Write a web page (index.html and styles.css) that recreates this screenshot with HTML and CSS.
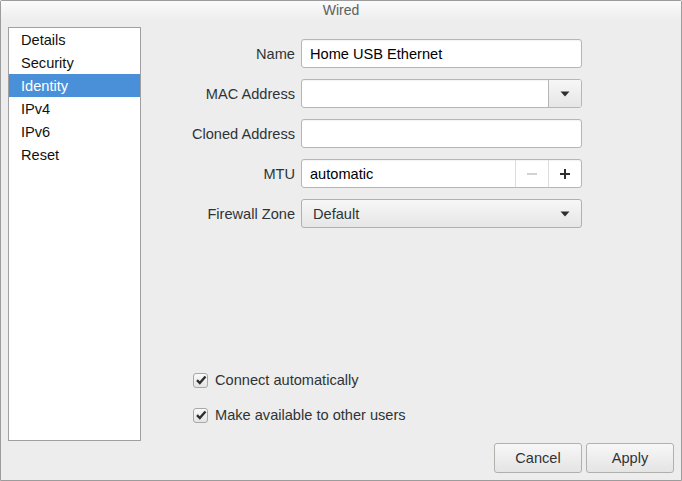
FILE: index.html
```html
<!DOCTYPE html>
<html>
<head>
<meta charset="utf-8">
<link rel="stylesheet" href="styles.css">
</head>
<body>
<div class="window">
  <div class="titlebar">Wired</div>
  <div class="content">
    <ul class="sidebar">
      <li>Details</li>
      <li>Security</li>
      <li class="selected">Identity</li>
      <li>IPv4</li>
      <li>IPv6</li>
      <li>Reset</li>
    </ul>
    <div class="main">
      <div class="form">
        <label class="lbl">Name</label>
        <div class="entry"><span class="val">Home USB Ethernet</span></div>
        <label class="lbl">MAC Address</label>
        <div class="entry">
          <span class="val"></span>
          <span class="ebtn grad"><svg width="10" height="6" viewBox="0 0 10 6"><path d="M0.5 0.5h9L5 5.5z" fill="#2e2e2e"/></svg></span>
        </div>
        <label class="lbl">Cloned Address</label>
        <div class="entry"><span class="val"></span></div>
        <label class="lbl">MTU</label>
        <div class="entry">
          <span class="val">automatic</span>
          <span class="ebtn"><svg width="12" height="12" viewBox="0 0 12 12"><rect x="1" y="5" width="10" height="2" fill="#d3d3d3"/></svg></span>
          <span class="ebtn"><svg width="12" height="12" viewBox="0 0 12 12"><rect x="1" y="5" width="10" height="2" fill="#2e2e2e"/><rect x="5" y="1" width="2" height="10" fill="#2e2e2e"/></svg></span>
        </div>
        <label class="lbl">Firewall Zone</label>
        <div class="combo grad">
          <span class="val">Default</span>
          <span class="arrow"><svg width="10" height="6" viewBox="0 0 10 6"><path d="M0.5 0.5h9L5 5.5z" fill="#2e2e2e"/></svg></span>
        </div>
      </div>
      <div class="checks">
        <div class="check"><span class="box"><svg width="12" height="12" viewBox="0 0 12 12"><path d="M2 6.2l2.8 2.8L10.5 2.5" fill="none" stroke="#2e2e2e" stroke-width="2.4"/></svg></span>Connect automatically</div>
        <div class="check"><span class="box"><svg width="12" height="12" viewBox="0 0 12 12"><path d="M2 6.2l2.8 2.8L10.5 2.5" fill="none" stroke="#2e2e2e" stroke-width="2.4"/></svg></span>Make available to other users</div>
      </div>
    </div>
  </div>
  <div class="actions">
    <button class="btn">Cancel</button>
    <button class="btn">Apply</button>
  </div>
</div>
</body>
</html>
```
FILE: styles.css
```css
* { box-sizing: border-box; }
html, body { margin: 0; padding: 0; background: #ededed; }
body { font-family: "Liberation Sans", Arial, sans-serif; font-size: 14.6px; color: #2e3436; }
.window {
  width: 682px; height: 481px;
  border: 1px solid #9c9c9c;
  border-top-right-radius: 2px;
  border-top-left-radius: 2px;
  background: #ededed;
  display: flex; flex-direction: column;
}
.titlebar {
  height: 20px;
  background: linear-gradient(#fbfbfb, #ededed);
  text-align: center;
  font-size: 14px;
  line-height: 18px;
  color: #5d6060;
}
.content {
  display: flex;
  padding: 6px 7px 0 7px;
  height: 420px;
}
.sidebar {
  list-style: none; margin: 0; padding: 0;
  width: 133px; height: 414px;
  border: 1px solid #a0a0a0;
  background: #fff;
}
.sidebar li {
  height: 23px; line-height: 24px;
  padding-left: 12px;
  color: #111;
}
.sidebar li.selected { background: #4a90d9; color: #fff; }
.main {
  flex: 1;
  display: flex; flex-direction: column;
  padding-top: 12px;
  padding-bottom: 16px;
}
.form {
  display: grid;
  grid-template-columns: 154px 281px;
  grid-auto-rows: 29px;
  column-gap: 6px;
  row-gap: 11px;
}
.lbl {
  text-align: right;
  height: 29px;
  padding-top: 1px;
  line-height: 29px;
  color: #2e3436;
}
.entry, .combo {
  height: 29px;
  border: 1px solid #b6b6b3;
  border-radius: 3px;
  display: flex; align-items: stretch;
  overflow: hidden;
}
.entry { background: #fff; box-shadow: inset 0 1px 1px rgba(0,0,0,0.05); }
.entry .val { flex: 1; padding-left: 8px; padding-top: 1px; line-height: 27px; color: #000; }
.ebtn {
  width: 33px;
  border-left: 1px solid #dcdcdc;
  display: flex; align-items: center; justify-content: center;
}
.ebtn.grad { border-left: 1px solid #b6b6b3; }
.grad { background: linear-gradient(#f7f7f7, #e6e6e6); }
.combo { border-color: #b0b0ad; }
.combo .val { flex: 1; padding-left: 11px; padding-top: 1px; line-height: 27px; color: #2e3436; }
.combo .arrow { width: 33px; display: flex; align-items: center; justify-content: center; }
.checks {
  margin-top: auto;
  margin-left: 52px;
  display: flex; flex-direction: column;
  row-gap: 15px;
}
.check {
  height: 20px;
  display: flex; align-items: center;
  color: #2e3436;
}
.box {
  width: 15px; height: 15px;
  border: 1px solid #a8a8a8;
  border-radius: 3px;
  background: linear-gradient(#fafafa, #e4e4e4);
  display: flex; align-items: center; justify-content: center;
  margin-right: 7px;
}
.actions {
  display: flex; justify-content: flex-end;
  column-gap: 4px;
  padding-right: 7px;
  margin-top: 2px;
}
.btn {
  width: 88px; height: 30px;
  border: 1px solid #b0b0ad;
  border-radius: 3px;
  background: linear-gradient(#f7f7f7, #e4e4e4);
  font-family: "Liberation Sans", Arial, sans-serif;
  font-size: 14.6px;
  color: #2e3436;
  padding: 0;
}
```
